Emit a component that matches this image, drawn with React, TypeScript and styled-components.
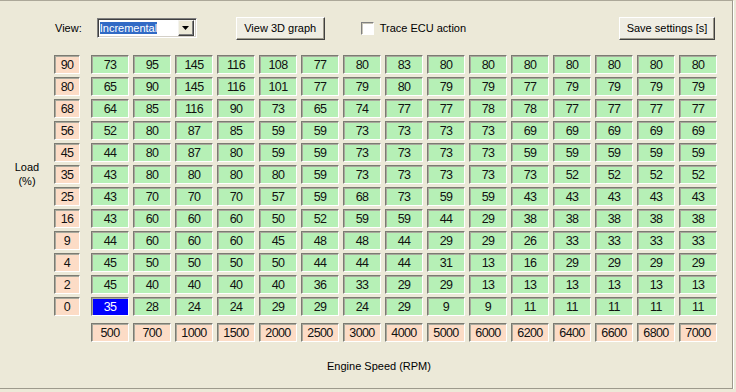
import React from "react";
import styled, { createGlobalStyle, css } from "styled-components";

const Global = createGlobalStyle`
  html, body { margin: 0; padding: 0; background: #ece9d8; }
  body { font-family: "Liberation Sans", Arial, sans-serif; font-size: 11px; color: #000; }
`;

const Frame = styled.div`
  box-sizing: border-box;
  width: 733px;
  height: 389px;
  border-top: 1px solid #aca899;
  border-right: 1px solid #9d9a8c;
  border-bottom: 1px solid #9d9a8c;
  box-shadow: 1px 1px 0 #ffffff;
  padding: 16px 0 0 55px;
  display: flex;
  flex-direction: column;
`;

const Toolbar = styled.div`
  display: flex;
  align-items: center;
  height: 22px;
  padding-right: 17px;
`;

const Label = styled.span`
  margin-right: 15px;
`;

const Combo = styled.div`
  box-sizing: border-box;
  width: 100px;
  height: 20px;
  background: #fff;
  border: 1px solid;
  border-color: #808080 #ffffff #ffffff #808080;
  box-shadow: inset 1px 1px 0 #404040, inset -1px -1px 0 #d4d0c8;
  display: flex;
  align-items: center;
  padding: 2px;
  margin-right: 39px;
`;

const ComboText = styled.div`
  flex: 1;
  overflow: hidden;
  white-space: nowrap;
`;

const Selected = styled.span`
  background: #316ac5;
  color: #fff;
  padding: 1px 0;
`;

const ArrowBtn = styled.div`
  box-sizing: border-box;
  width: 16px;
  height: 16px;
  background: #ece9d8;
  border: 1px solid;
  border-color: #f4f3ee #404040 #404040 #f4f3ee;
  box-shadow: inset -1px -1px 0 #808080;
  display: flex;
  align-items: center;
  justify-content: center;
`;

const Button = styled.button<{ $w: number }>`
  box-sizing: border-box;
  width: ${(p) => p.$w}px;
  height: 23px;
  font: inherit;
  color: #000;
  background: #efede3;
  border: 1px solid;
  border-color: #ffffff #404040 #404040 #ffffff;
  box-shadow: inset -1px -1px 0 #9d9a8c;
  padding: 0;
`;

const CheckWrap = styled.label`
  display: flex;
  align-items: center;
  margin-left: 36px;
`;

const CheckBox = styled.span`
  box-sizing: border-box;
  width: 13px;
  height: 13px;
  background: #fff;
  border: 1px solid;
  border-color: #808080 #ffffff #ffffff #808080;
  box-shadow: inset 1px 1px 0 #c9c6b8;
  margin-right: 6px;
`;

const Spacer = styled.div`
  flex: 1;
`;

const Body = styled.div`
  display: flex;
  margin-left: -55px;
  margin-top: 16px;
`;

const SideLabel = styled.div`
  width: 54px;
  padding-top: 105px;
  text-align: center;
  line-height: 14px;
`;

const Grid = styled.div`
  display: grid;
  grid-template-columns: 33px repeat(15, 38px);
  grid-auto-rows: 19px;
  column-gap: 4px;
  row-gap: 3px;
`;

const Cell = styled.div<{ $kind: "data" | "axis" | "sel"; $axisRow?: boolean }>`
  box-sizing: border-box;
  height: 19px;
  display: flex;
  align-items: center;
  justify-content: center;
  font-family: "Liberation Sans", Arial, sans-serif;
  font-size: 12.5px;
  letter-spacing: -0.6px;
  border: 1px solid;
  border-color: #7b7b72 #ffffff #ffffff #7b7b72;
  box-shadow: inset 1px 1px 0 #a8a89c;
  background: ${(p) => (p.$kind === "data" ? "#b6f0b6" : p.$kind === "sel" ? "#0000ff" : "#fcdcc6")};
  color: ${(p) => (p.$kind === "sel" ? "#fff" : "#111")};
  ${(p) =>
    p.$axisRow &&
    css`
      margin-top: 4px;
    `}
`;

const RowLabel = styled(Cell)`
  width: 26px;
`;

const Empty = styled.div``;

const Footer = styled.div`
  margin-top: 22px;
  padding-left: 272px;
`;

const loads = [90, 80, 68, 56, 45, 35, 25, 16, 9, 4, 2, 0];
const rpm = [500, 700, 1000, 1500, 2000, 2500, 3000, 4000, 5000, 6000, 6200, 6400, 6600, 6800, 7000];
const data = [
  [73, 95, 145, 116, 108, 77, 80, 83, 80, 80, 80, 80, 80, 80, 80],
  [65, 90, 145, 116, 101, 77, 79, 80, 79, 79, 77, 79, 79, 79, 79],
  [64, 85, 116, 90, 73, 65, 74, 77, 77, 78, 78, 77, 77, 77, 77],
  [52, 80, 87, 85, 59, 59, 73, 73, 73, 73, 69, 69, 69, 69, 69],
  [44, 80, 87, 80, 59, 59, 73, 73, 73, 73, 59, 59, 59, 59, 59],
  [43, 80, 80, 80, 80, 59, 73, 73, 73, 73, 73, 52, 52, 52, 52],
  [43, 70, 70, 70, 57, 59, 68, 73, 59, 59, 43, 43, 43, 43, 43],
  [43, 60, 60, 60, 50, 52, 59, 59, 44, 29, 38, 38, 38, 38, 38],
  [44, 60, 60, 60, 45, 48, 48, 44, 29, 29, 26, 33, 33, 33, 33],
  [45, 50, 50, 50, 50, 44, 44, 44, 31, 13, 16, 29, 29, 29, 29],
  [45, 40, 40, 40, 40, 36, 33, 29, 29, 13, 13, 13, 13, 13, 13],
  [35, 28, 24, 24, 29, 29, 24, 29, 9, 9, 11, 11, 11, 11, 11],
];

export default function App() {
  return (
    <>
      <Global />
      <Frame>
        <Toolbar>
          <Label>View:</Label>
          <Combo>
            <ComboText>
              <Selected>Incremental</Selected>
            </ComboText>
            <ArrowBtn>
              <svg width="7" height="4" viewBox="0 0 7 4">
                <path d="M0 0h7L3.5 4z" fill="#000" />
              </svg>
            </ArrowBtn>
          </Combo>
          <Button $w={89}>View 3D graph</Button>
          <CheckWrap>
            <CheckBox />
            Trace ECU action
          </CheckWrap>
          <Spacer />
          <Button $w={96}>Save settings [s]</Button>
        </Toolbar>
        <Body>
          <SideLabel>
            Load
            <br />
            (%)
          </SideLabel>
          <Grid>
            {loads.map((l, r) => (
              <React.Fragment key={l}>
                <RowLabel $kind="axis">{l}</RowLabel>
                {data[r].map((v, c) => (
                  <Cell key={c} $kind={r === 11 && c === 0 ? "sel" : "data"}>
                    {v}
                  </Cell>
                ))}
              </React.Fragment>
            ))}
            <Empty />
            {rpm.map((v) => (
              <Cell key={v} $kind="axis" $axisRow>
                {v}
              </Cell>
            ))}
          </Grid>
        </Body>
        <Footer>Engine Speed (RPM)</Footer>
      </Frame>
    </>
  );
}
